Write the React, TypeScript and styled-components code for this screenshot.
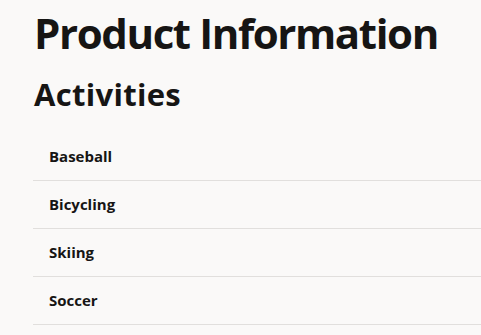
import React from "react";
import styled, { createGlobalStyle } from "styled-components";

const Global = createGlobalStyle`
  html, body { margin: 0; padding: 0; background: #faf9f8; }
  body { font-family: "Open Sans", "Noto Sans", sans-serif; color: #161514; }
`;

const Page = styled.main`
  padding: 9px 0 0 33px;
`;

const Title = styled.h1`
  margin: 0;
  font-size: 42px;
  line-height: 48px;
  font-weight: 700;
  letter-spacing: -1.4px;
  padding-left: 1px;
`;

const Subtitle = styled.h2`
  margin: 19px 0 0;
  font-size: 31px;
  line-height: 36px;
  font-weight: 700;
  letter-spacing: 0.3px;
  padding-left: 1px;
`;

const List = styled.ul`
  list-style: none;
  margin: 21px 0 0;
  padding: 0;
`;

const Row = styled.li`
  height: 48px;
  box-sizing: border-box;
  display: flex;
  align-items: center;
  padding: 0 0 1px 16px;
  border-bottom: 1px solid #e1dfdd;
  font-size: 15px;
  font-weight: 700;
`;

const items = ["Baseball", "Bicycling", "Skiing", "Soccer"];

export default function App() {
  return (
    <>
      <Global />
      <Page>
        <Title>Product Information</Title>
        <Subtitle>Activities</Subtitle>
        <List>
          {items.map((i) => (
            <Row key={i}>{i}</Row>
          ))}
        </List>
      </Page>
    </>
  );
}
